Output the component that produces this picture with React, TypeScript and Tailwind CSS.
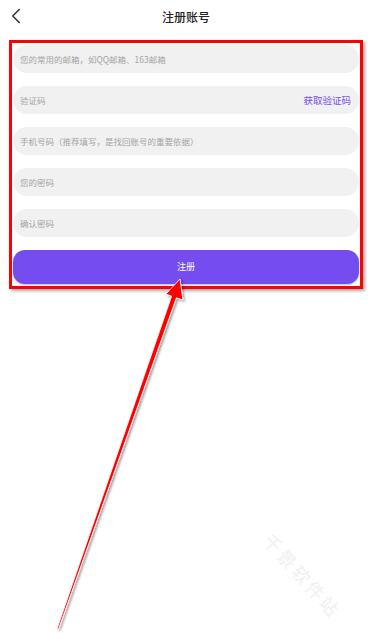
import { ChevronLeft } from "lucide-react";

const fields = [
  "您的常用的邮箱，如QQ邮箱、163邮箱",
  "验证码",
  "手机号码（推荐填写，是找回账号的重要依据）",
  "您的密码",
  "确认密码",
];

export default function App() {
  return (
    <div
      className="relative w-[372px] h-[634px] bg-white overflow-hidden"
      style={{ fontFamily: '"Noto Sans CJK SC", "Noto Sans", sans-serif' }}
    >
      {/* Header */}
      <div className="relative flex items-center justify-center h-[34px]">
        <ChevronLeft className="absolute left-[3px] top-[3px] w-[26px] h-[26px] text-[#333]" strokeWidth={1.4} />
        <span className="text-[12px] text-[#222] font-medium">注册账号</span>
      </div>

      {/* Form (highlighted) */}
      <div className="mx-[9px] mt-[6px] border-[3px] border-[#f00] shadow-[2px_2px_3px_rgba(0,0,0,0.35)] px-[1px] pt-[2px] pb-[2px]">
        <div className="flex flex-col gap-[13px]">
          {fields.map((f, i) => (
            <div
              key={i}
              className="flex items-center justify-between h-[28px] rounded-full bg-[#f1f1f1] pl-[7px] pr-[8px]"
            >
              <span className="text-[8.5px] text-[#a4a4a4]">{f}</span>
              {i === 1 && <span className="text-[9.5px] text-[#7650f0]">获取验证码</span>}
            </div>
          ))}
        </div>
        <button className="mt-[13px] w-full h-[34px] rounded-[12px] bg-[#744cef] text-white text-[9px] flex items-center justify-center shadow-[0_1px_2px_rgba(0,0,0,0.25)]">
          注册
        </button>
      </div>

      {/* Annotation arrow */}
      <svg className="absolute left-0 top-0" width="372" height="634" viewBox="0 0 372 634">
        <defs>
          <filter id="sh" x="-20%" y="-20%" width="140%" height="140%">
            <feDropShadow dx="1.5" dy="1.5" stdDeviation="1" floodColor="#000" floodOpacity="0.4" />
          </filter>
        </defs>
        <path
          d="M57 629 L171.6 296.2 L166 294 L180 279 L183 300 L176.4 297.8 L58.5 629 Z"
          fill="#ff0000"
          stroke="#fff"
          strokeWidth="0.8"
          strokeLinejoin="round"
          filter="url(#sh)"
        />
      </svg>

      {/* Watermark */}
      <div className="absolute left-[250px] top-[562px] rotate-[48deg] text-[18px] text-[#f0f0f0] tracking-[3px] whitespace-nowrap">
        千景软件站
      </div>
    </div>
  );
}
